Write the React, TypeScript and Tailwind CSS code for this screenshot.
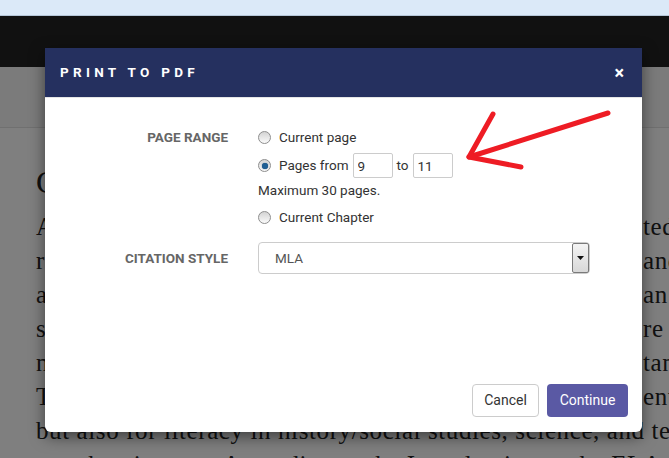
import React from 'react';

const lines = [
    { left: 'As', right: 'ted to' },
    { left: 're', right: 'and' },
    { left: 'an', right: 'an' },
    { left: 'st', right: 're in' },
    { left: 'ne', right: 'tant' },
    { left: 'Th', right: 'ent' },
];

function Radio({ checked = false }: { checked?: boolean }) {
    return (
        <span className="w-[13px] h-[13px] shrink-0 rounded-full border border-[#8e8e8e] bg-linear-to-b from-[#d4d4d4] to-[#fafafa] flex items-center justify-center">
            {checked && <span className="w-[6px] h-[6px] rounded-full bg-[#1f5f94] shadow-[0_0_1px_#0b3a66]" />}
        </span>
    );
}

export default function App() {
    return (
        <div className="relative w-full h-[458px] overflow-hidden bg-white" style={{ fontFamily: 'Roboto, "Liberation Sans", sans-serif' }}>
            {/* browser bar */}
            <div className="h-[16px] bg-[#dbe9f8] border-b border-[#b5c6d8]" />

            {/* page beneath the dialog */}
            <div className="relative">
                <div className="h-[51px] bg-[#222]" />
                <div className="h-[61px] bg-[#f6f6f6] border-b border-[#e0e0e0]" />
                <div className="pl-[36px] pt-[32px] text-[#222]" style={{ fontFamily: '"Liberation Serif", serif' }}>
                    <div className="text-[32px] leading-[44px]">Curriculum</div>
                    <div className="mt-[6px] text-[25px] leading-[34px] tracking-[0.6px]">
                        {lines.map((l, i) => (
                            <div key={i} className="flex whitespace-nowrap">
                                <span className="w-[607px] shrink-0">{l.left}</span>
                                <span>{l.right}</span>
                            </div>
                        ))}
                        <div className="whitespace-nowrap">but also for literacy in history/social studies, science, and technical</div>
                        <div className="whitespace-nowrap pl-[20px]">authentic texts. According to the Introduction to the ELA Standards</div>
                    </div>
                </div>
                <div className="absolute inset-0 bg-black/50" />
            </div>

            {/* dialog */}
            <div className="absolute left-[45px] top-[48px] w-[597px] h-[384px] bg-white rounded-b-[6px] shadow-[0_5px_15px_rgba(0,0,0,0.5)] flex flex-col">
                <div className="h-[50px] shrink-0 bg-[#25305f] border-b border-[#e5e5e5] flex items-center justify-between pl-[15px] pr-[18px]">
                    <span className="text-white text-[13.5px] font-bold tracking-[4.3px]">PRINT TO PDF</span>
                    <span className="text-white text-[18px] font-bold leading-none">×</span>
                </div>

                <div className="flex-1 flex flex-col pt-[29px] pb-[15px] pr-[14px]">
                    <div className="flex">
                        <div className="w-[183px] shrink-0 text-right text-[13.5px] font-bold text-[#666] leading-[20px]">PAGE RANGE</div>
                        <div className="ml-[30px] flex flex-col text-[13.5px] text-[#333]">
                            <label className="h-[20px] flex items-center gap-[8px]">
                                <Radio />
                                <span>Current page</span>
                            </label>
                            <label className="mt-[6px] h-[25px] flex items-center">
                                <Radio checked />
                                <span className="ml-[8px]">Pages from</span>
                                <input readOnly value="9" className="ml-[4px] w-[40px] h-[25px] border border-[#ccc] rounded-[2px] pl-[4px] text-[13.5px] text-[#333] outline-none" />
                                <span className="ml-[4px]">to</span>
                                <input readOnly value="11" className="ml-[4px] w-[40px] h-[25px] border border-[#ccc] rounded-[2px] pl-[4px] text-[13.5px] text-[#333] outline-none" />
                            </label>
                            <div className="mt-[4px] leading-[16px]">Maximum 30 pages.</div>
                            <label className="mt-[10px] h-[18px] flex items-center gap-[8px]">
                                <Radio />
                                <span>Current Chapter</span>
                            </label>
                        </div>
                    </div>

                    <div className="mt-[16px] flex items-center">
                        <div className="w-[183px] shrink-0 text-right text-[13.5px] font-bold text-[#666]">CITATION STYLE</div>
                        <div className="ml-[30px] w-[332px] h-[32px] border border-[#ccc] rounded-[4px] flex items-center justify-between">
                            <span className="pl-[16px] text-[13.5px] text-[#555]">MLA</span>
                            <span className="w-[17px] h-[30px] border border-[#7a7a7a] rounded-[2px] bg-linear-to-b from-[#f4f4f4] to-[#d8d8d8] flex items-center justify-center">
                                <svg width="7" height="4" viewBox="0 0 7 4"><path d="M0 0h7L3.5 4z" fill="#111" /></svg>
                            </span>
                        </div>
                    </div>

                    <div className="mt-auto flex justify-end gap-[8px]">
                        <button className="w-[67px] h-[33px] bg-white border border-[#ccc] rounded-[4px] text-[14px] text-[#333]">Cancel</button>
                        <button className="w-[81px] h-[33px] bg-[#5a59a4] rounded-[4px] text-[14px] text-white">Continue</button>
                    </div>
                </div>
            </div>

            {/* red annotation arrow */}
            <svg className="absolute left-0 top-0 pointer-events-none" width="669" height="458">
                <g stroke="#ee1c24" strokeWidth="5" strokeLinecap="round" strokeLinejoin="round" fill="none">
                    <path d="M608 113 L469 157" />
                    <path d="M493 114 L469 157 L521 167" />
                </g>
            </svg>
        </div>
    );
}
